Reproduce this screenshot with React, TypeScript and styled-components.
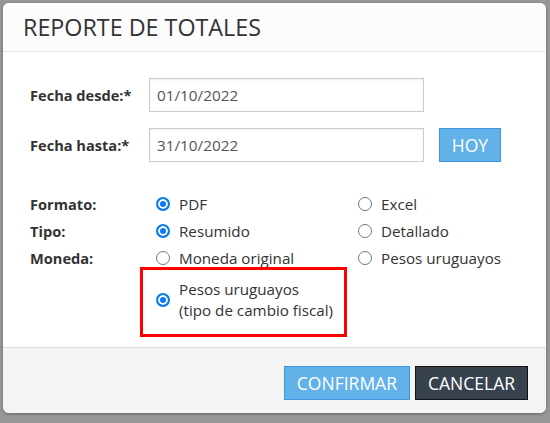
import styled, { createGlobalStyle } from 'styled-components';

const GlobalStyle = createGlobalStyle`
  html, body {
    margin: 0;
    padding: 0;
    background: #979797;
  }
  * {
    box-sizing: border-box;
  }
`;

const Backdrop = styled.div`
  width: 550px;
  height: 423px;
  padding: 3px 4px 10px 3px;
  background: #979797;
  font-family: 'Open Sans', 'Noto Sans', sans-serif;
`;

const Dialog = styled.div`
  display: flex;
  flex-direction: column;
  height: 100%;
  background: #fff;
  border-radius: 6px;
  overflow: hidden;
  box-shadow: 0 1px 3px rgba(0, 0, 0, 0.35);
`;

const Header = styled.div`
  height: 49px;
  padding: 8px 0 0 20px;
  background: #fcfcfc;
  border-bottom: 1px solid #e5e5e5;
`;

const Title = styled.h1`
  margin: 0;
  font-size: 23.3px;
  font-weight: 400;
  color: #333;
`;

const Body = styled.div`
  flex: 1;
  padding: 26px 0 0 27px;
`;

const FieldRow = styled.div`
  display: flex;
  align-items: center;
  height: 34px;
  margin-bottom: 16px;
`;

const Label = styled.label`
  width: 119px;
  font-size: 14.6px;
  font-weight: 700;
  color: #333;
`;

const Input = styled.input`
  width: 275px;
  height: 34px;
  padding: 0 7px;
  border: 1px solid #ccc;
  box-shadow: inset 0 1px 2px rgba(0, 0, 0, 0.08);
  font-family: inherit;
  font-size: 15.3px;
  color: #555;
  outline: none;
`;

const Button = styled.button<{ $dark?: boolean }>`
  height: 34px;
  padding: 0 12px;
  border: 1px solid ${(p) => (p.$dark ? '#111' : '#3e95db')};
  background: ${(p) => (p.$dark ? '#38424f' : '#63b1e9')};
  color: #fff;
  font-family: inherit;
  font-size: 17.5px;
  text-transform: uppercase;
  cursor: pointer;
`;

const HoyButton = styled(Button)`
  margin-left: 15px;
  width: 62px;
  padding: 0;
`;

const Options = styled.div`
  display: grid;
  grid-template-columns: 126px 202px auto;
  grid-auto-rows: 27px;
  align-items: center;
  margin-top: 28px;
`;

const OptLabel = styled.span`
  font-size: 14.6px;
  font-weight: 700;
  color: #333;
`;

const Option = styled.label`
  display: flex;
  align-items: center;
  gap: 9px;
  font-size: 15.2px;
  color: #333;
`;

const Dot = styled.span<{ $on?: boolean }>`
  flex: none;
  width: 14px;
  height: 14px;
  border-radius: 50%;
  border: ${(p) => (p.$on ? '2px solid #0b7cf0' : '1px solid #767676')};
  background: ${(p) => (p.$on ? '#0b7cf0' : '#fff')};
  box-shadow: ${(p) => (p.$on ? 'inset 0 0 0 2px #fff' : 'none')};
`;

const Highlight = styled.div`
  grid-column: 2 / span 2;
  align-self: start;
  justify-self: start;
  display: flex;
  align-items: center;
  gap: 9px;
  width: 207px;
  height: 70px;
  margin: -4px 0 0 -16px;
  padding: 0 0 5px 13px;
  border: 3px solid #f00;
  font-size: 15.2px;
  line-height: 21px;
  color: #333;
`;

const Footer = styled.div`
  display: flex;
  justify-content: flex-end;
  gap: 5px;
  height: 66px;
  padding: 18px 18px 0 0;
  background: #f4f4f4;
  border-top: 1px solid #ddd;
`;

function Radio({ on, children }: { on?: boolean; children: string }) {
  return (
    <Option>
      <Dot $on={on} />
      {children}
    </Option>
  );
}

export default function App() {
  return (
    <>
      <GlobalStyle />
      <Backdrop>
        <Dialog>
          <Header>
            <Title>REPORTE DE TOTALES</Title>
          </Header>
          <Body>
            <FieldRow>
              <Label>Fecha desde:*</Label>
              <Input defaultValue="01/10/2022" />
            </FieldRow>
            <FieldRow>
              <Label>Fecha hasta:*</Label>
              <Input defaultValue="31/10/2022" />
              <HoyButton>Hoy</HoyButton>
            </FieldRow>
            <Options>
              <OptLabel>Formato:</OptLabel>
              <Radio on>PDF</Radio>
              <Radio>Excel</Radio>
              <OptLabel>Tipo:</OptLabel>
              <Radio on>Resumido</Radio>
              <Radio>Detallado</Radio>
              <OptLabel>Moneda:</OptLabel>
              <Radio>Moneda original</Radio>
              <Radio>Pesos uruguayos</Radio>
              <span />
              <Highlight>
                <Dot $on />
                <span>
                  Pesos uruguayos
                  <br />
                  (tipo de cambio fiscal)
                </span>
              </Highlight>
            </Options>
          </Body>
          <Footer>
            <Button>Confirmar</Button>
            <Button $dark>Cancelar</Button>
          </Footer>
        </Dialog>
      </Backdrop>
    </>
  );
}
